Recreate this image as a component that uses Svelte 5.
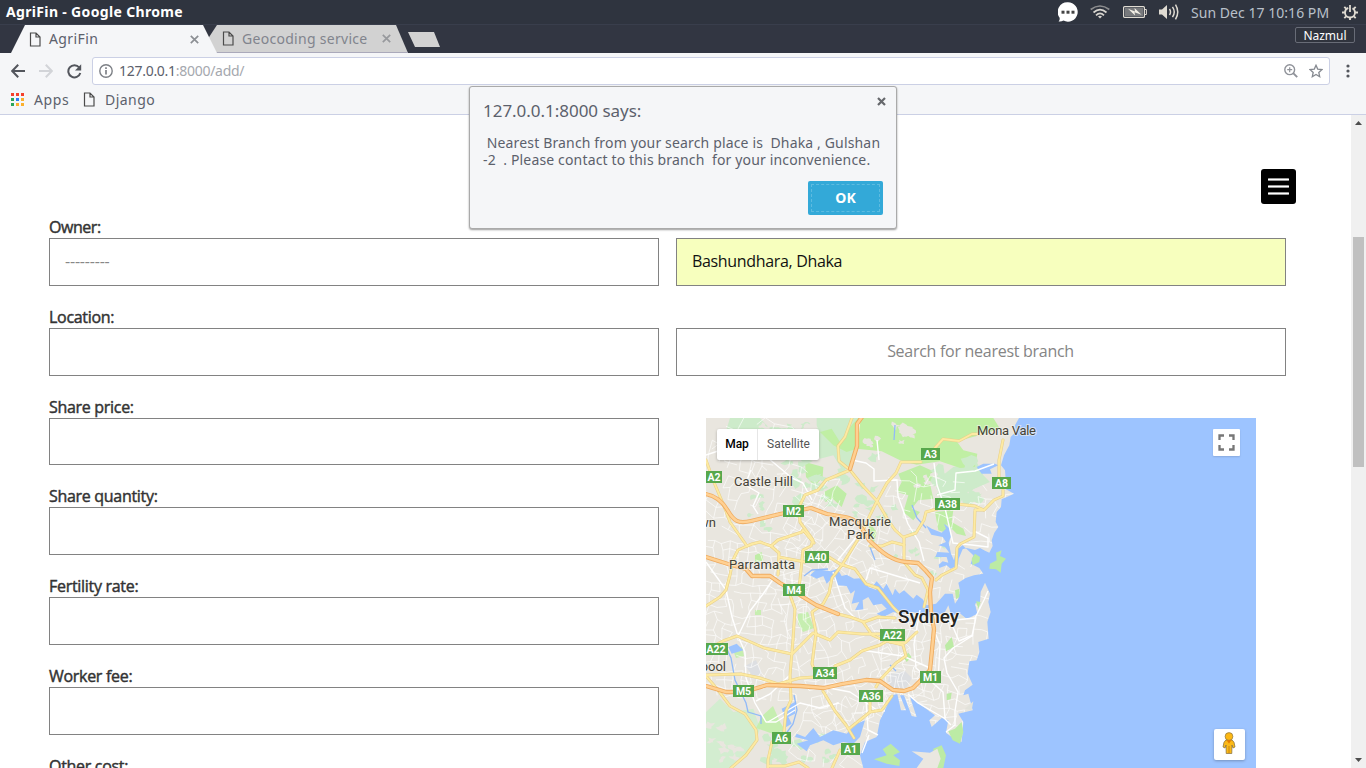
<script>
  const fields = ['Owner:', 'Location:', 'Share price:', 'Share quantity:', 'Fertility rate:', 'Worker fee:', 'Other cost:'];
  const message = ' Nearest Branch from your search place is  Dhaka , Gulshan\n-2  . Please contact to this branch  for your inconvenience.';

  // Deterministic street mesh under the main roads
  let seed = 17;
  const rnd = () => ((seed = (seed * 16807) % 2147483647) / 2147483647);
  function mesh(x0, y0, x1, y1, step, angle, keep) {
    const c = Math.cos(angle), s = Math.sin(angle);
    const cols = Math.ceil((x1 - x0) / step), rows = Math.ceil((y1 - y0) / step);
    const cx = (x0 + x1) / 2, cy = (y0 + y1) / 2;
    const pts = [];
    for (let j = 0; j <= rows; j++) {
      pts.push([]);
      for (let i = 0; i <= cols; i++) {
        const dx = x0 + i * step - cx + (rnd() - 0.5) * step * 0.6;
        const dy = y0 + j * step - cy + (rnd() - 0.5) * step * 0.6;
        pts[j].push((cx + dx * c - dy * s).toFixed(1) + ' ' + (cy + dx * s + dy * c).toFixed(1));
      }
    }
    let d = '';
    for (let j = 0; j <= rows; j++)
      for (let i = 0; i <= cols; i++) {
        if (i < cols && rnd() < keep) d += `M${pts[j][i]}L${pts[j][i + 1]}`;
        if (j < rows && rnd() < keep) d += `M${pts[j][i]}L${pts[j + 1][i]}`;
      }
    return d;
  }
  const streets = [
    mesh(700, 460, 830, 540, 10, 0.3, 0.5),
    mesh(700, 545, 800, 690, 8, 0.1, 0.68),
    mesh(790, 500, 870, 560, 8, 0.6, 0.62),
    mesh(795, 560, 900, 720, 9, -0.3, 0.62),
    mesh(880, 480, 1000, 590, 9, 0.2, 0.45),
    mesh(880, 610, 985, 730, 8, 0.12, 0.62),
    mesh(800, 700, 885, 765, 9, 0.4, 0.5),
    mesh(708, 420, 820, 470, 14, 0.5, 0.4)
  ];

  function blobs(x0, y0, w, h, n, size) {
    let d = '';
    for (let k = 0; k < n; k++) {
      const x = x0 + rnd() * w, y = y0 + rnd() * h;
      const m = 9;
      for (let i = 0; i < m; i++) {
        const a = (i / m) * 6.283, r = size * (0.25 + rnd() * 1);
        d += (i ? 'L' : 'M') + (x + Math.cos(a) * r * 1.3).toFixed(1) + ' ' + (y + Math.sin(a) * r).toFixed(1);
      }
      d += 'Z';
    }
    return d;
  }
  const paleGreen = blobs(785, 455, 90, 50, 26, 5) + blobs(750, 420, 60, 30, 12, 5) + blobs(935, 460, 45, 40, 18, 6) + blobs(765, 735, 40, 25, 14, 5) + blobs(850, 505, 50, 30, 8, 3) + blobs(745, 495, 30, 40, 7, 3) + blobs(880, 520, 70, 60, 10, 3) + blobs(810, 735, 35, 30, 8, 3);
  const clearings = blobs(865, 432, 60, 14, 7, 3) + blobs(710, 725, 35, 38, 12, 4) + blobs(895, 424, 25, 14, 5, 5) + blobs(755, 422, 60, 8, 6, 4) + blobs(915, 470, 20, 20, 4, 3);

  const motorways = [
    'M706 494C716 496 723 502 728 511C734 521 738 524 751 521L780 514L811 508L827 514L845 517C858 519 862 528 869 540C882 553 893 561 906 562L918 563L926 571L932 578L930 592L931 612L934 629L932 650L930 670L920 681L913 688L904 691L893 690L880 681L866 680L842 684L824 688L800 686L767 685L744 692L726 692L706 686',
    'M706 557L728 564L746 569L752 576L770 576L780 583L795 592L816 605L838 614',
    'M862 417L857 424L857 446L850 469'
  ];
  const arterials = [
    'M706 460L713 480L724 506L730 522L747 546L752 544L760 542L771 546L778 540L802 532L803 530L814 543',
    'M706 606L720 597L726 590L730 575L733 560L738 550L747 546',
    'M852 418L845 437L838 446L839 461L850 470L838 475L826 480L818 490L805 495L799 507L800 522L813 540L811 546L803 550L800 580L798 592',
    'M771 546L779 553L778 575M779 557L805 562M829 557L840 564L855 569L866 584L878 588L893 607L898 612',
    'M790 595L795 609L793 640L790 675L791 700L786 711L784 732M772 742L768 760L768 768M768 766L785 766L799 762L808 768',
    'M850 470L862 485L877 501L888 520L895 530L904 538L904 562L915 575L922 578L928 590L924 607',
    'M877 501L870 515L862 533L842 565L832 578L829 593L823 604L812 612L816 633L812 664L817 676M823 691L835 711L846 725L854 738M840 750L832 768',
    'M877 501L887 483L896 473L901 462L921 462M935 448L943 439L959 441L972 434L981 434M1003 440L999 460L999 478M1003 490L1003 496L994 500L984 510L975 510L974 537L960 544L957 548L956 568L942 575L936 580',
    'M904 537L916 533L924 520L926 512L937 509M957 504L975 506L984 510M870 546L882 546L892 542L904 545',
    'M706 650L723 641L737 636L753 643L764 648L792 654L813 633L830 640L838 632L862 634L880 634L887 632L898 633',
    'M706 675L741 674L760 678L778 684L800 678L815 677M835 666L850 660L862 651L880 645L887 641L903 645L906 656L896 663L880 680L876 687M870 701L870 712L882 710L892 696M870 712L850 728',
    'M706 676L718 690L730 706L745 714L756 730L757 740L746 755L731 768',
    'M838 614L850 617L864 622L878 617L895 618M863 622L872 635L883 640M917 632L905 643L890 642'
  ];
  const whites = [
    'M706 455L730 447L748 457L768 458L792 478L803 483L812 500',
    'M751 470L745 485L759 493L753 506L758 514',
    'M706 562L726 590L732 617L738 636L745 652L746 678L755 703L766 722L776 722L795 710',
    'M738 636L750 611L763 594L774 578',
    'M852 460L866 463L874 469L874 481L897 480L898 496L908 524L919 542L924 561M877 440L879 460M860 418L858 436',
    'M934 463L937 485L945 508L953 543L972 545L988 547L988 538L974 531',
    'M937 495L955 490L956 473L975 471L994 464',
    'M955 620L975 618L984 600L988 591M976 617L972 636L953 648L944 658L947 673L958 692L955 711L955 725L946 732',
    'M920 610L914 644L916 668L943 692L945 718M860 650L903 656L930 668',
    'M819 686L850 692L877 710L885 711M908 694L918 703L944 718L951 725M869 735L862 753M866 700L868 730L878 735',
    'M950 620L959 641L973 635M930 620L940 645L938 682',
    'M768 722L800 703L820 708L839 703M790 675L770 694L756 701',
    'M866 580L870 568L920 583M833 572L845 608L857 620M838 560L870 520'
  ];
  const creeks = 'M895 425L894 440M912 505L917 518L926 528M725 645L731 658L735 680L746 703L748 712L761 716L761 724M794 695L797 710L793 724L785 735M890 665L896 671M875 560L870 547M804 576L812 570L828 569';

  const shields = [
    ['A2', 706, 471, 16], ['A3', 921, 448, 19], ['A8', 992, 477, 19], ['A38', 935, 498, 25], ['M2', 783, 505, 21],
    ['A40', 805, 551, 24], ['M4', 783, 584, 22], ['A22', 880, 629, 25], ['A22', 704, 643, 24], ['A34', 813, 667, 24],
    ['M1', 920, 671, 21], ['M5', 733, 685, 21], ['A36', 859, 690, 24], ['A6', 772, 732, 19], ['A1', 841, 743, 19]
  ];
  const places = [
    ['Mona Vale', 977, 435, 59], ['Castle Hill', 734, 486, 59], ['Macquarie', 829, 526, 62],
    ['Park', 847, 539, 27], ['Parramatta', 729, 569, 66]
  ];
</script>

{#snippet page()}
  <svg class="doc" width="12" height="15" viewBox="0 0 12 15"><path d="M1.500 1h5.500l4 4v9H1.500zM7 1v4h4" fill="none" stroke="#4b4b4b" stroke-width="1.200"/></svg>
{/snippet}

<div class="screen">
  <header class="system">
    <b>AgriFin - Google Chrome</b>
    <div class="tray">
      <svg width="20" height="20" viewBox="0 0 20 20"><path d="M10 .3a9.7 9.7 0 1 1-4.5 18.3C4 19.4 2 19.7.6 19.4c1-1 1.200-2 1-3.700A9.700 9.700 0 0 1 10 .3z" fill="#fff"/><g fill="#444"><rect x="3.500" y="8.700" width="3" height="3"/><rect x="8.500" y="8.700" width="3" height="3"/><rect x="13.500" y="8.700" width="3" height="3"/></g></svg>
      <svg width="20" height="14" viewBox="0 0 20 14" fill="none" stroke="#d8d5cf" stroke-width="1.700"><path d="M.7 4.500Q10-2.500 19.300 4.500" opacity=".55"/><path d="M3.500 7.500Q10 1.800 16.500 7.500"/><path d="M6 10.300Q10 6.300 14 10.300"/><path d="M8 11.500L10 13.500L12 11.500Q10 10 8 11.500" fill="#d8d5cf" stroke="none"/></svg>
      <svg width="24" height="12" viewBox="0 0 24 12"><rect x=".6" y=".6" width="20.800" height="10.800" rx="1" fill="none" stroke="#dfdbd2" stroke-width="1.200"/><rect x="2" y="2" width="18" height="8" fill="#77797c"/><path d="M22 3.500h1.400v5H22" fill="none" stroke="#dfdbd2"/><path d="M5 2.800L12 5.500 11.500 2l7 6.800-7-2.600.6 3.200z" fill="#f2eee5"/></svg>
      <svg width="20" height="16" viewBox="0 0 20 16"><path d="M0 5.500h3L8 1v14l-5-4.500H0z" fill="#dfdbd2"/><g fill="none" stroke="#dfdbd2" stroke-width="1.500"><path d="M10.500 5q2 3 0 6M13.500 2.800q3.500 5.200 0 10.400M16.500.7q4.500 7.300 0 14.600"/></g></svg>
      <span class="clock">Sun Dec 17 10:16 PM</span>
      <svg width="16" height="16" viewBox="0 0 16 16" fill="none" stroke="#dfdbd2"><circle cx="8" cy="8.500" r="5" stroke-width="1.800" stroke-dasharray="26.200 5.200" stroke-dashoffset="-2.600" transform="rotate(-90 8 8.500)"/><path d="M8 1v7" stroke-width="1.800"/><path d="M0 8.500h3M13 8.500h3M2.300 2.800l1.800 1.800M13.700 2.800l-1.800 1.800M2.300 14.200l1.800-1.800M13.700 14.200l-1.800-1.800M8 13.500V16" stroke-width="1.900"/></svg>
    </div>
  </header>

  <nav class="tabs">
    <div class="tab active">{@render page()}<span>AgriFin</span><svg width="9" height="9" viewBox="0 0 9 9"><path d="M.8.8l7.400 7.400M8.200.8L.8 8.200" stroke="#8c8f94" stroke-width="1.700"/></svg></div>
    <div class="tab back">{@render page()}<span>Geocoding service</span><svg width="9" height="9" viewBox="0 0 9 9"><path d="M.8.8l7.400 7.400M8.200.8L.8 8.200" stroke="#97999d" stroke-width="1.700"/></svg></div>
    <div class="newtab"></div>
    <div class="user">Nazmul</div>
  </nav>

  <div class="toolbar">
    <svg width="14" height="14" viewBox="0 0 14 14" fill="none" stroke="#53565d" stroke-width="2"><path d="M14 7H1.500M7.200.8L1.200 7l6 6.200"/></svg>
    <svg class="fwd" width="14" height="14" viewBox="0 0 14 14" fill="none" stroke="#d2d4d8" stroke-width="2"><path d="M0 7h12.500M6.800.8l6 6.200-6 6.200"/></svg>
    <svg class="reload" width="15" height="15" viewBox="0 0 15 15"><path d="M12.200 3.500A6.100 6.100 0 1 0 13.300 9" fill="none" stroke="#53565d" stroke-width="2"/><path d="M14.200.3v6.200H8z" fill="#53565d"/></svg>
    <div class="address">
      <svg width="14" height="14" viewBox="0 0 14 14"><circle cx="7" cy="7" r="6.200" fill="none" stroke="#7d8086" stroke-width="1.400"/><path d="M7 6v4.600M7 3.300v1.700" stroke="#777a80" stroke-width="1.600"/></svg>
      <span class="url">127.0.0.1<i>:8000/add/</i></span>
      <svg class="mag" width="14" height="14" viewBox="0 0 14 14" fill="none" stroke="#8f9299"><circle cx="5.700" cy="5.700" r="4.900" stroke-width="1.400"/><path d="M9.200 9.200l4 4" stroke-width="1.900"/><path d="M5.700 3.200v5M3.200 5.700h5" stroke-width="1.200"/></svg>
      <svg width="14" height="14" viewBox="0 0 14 14"><path d="M7 1.300l1.700 3.800 4.300.4-3.200 2.900.9 4.300L7 10.500l-3.700 2.200.9-4.300L1 5.500l4.300-.4z" fill="none" stroke="#858990" stroke-width="1.300"/></svg>
    </div>
    <svg class="dots" width="4" height="14" viewBox="0 0 4 14" fill="#53565d"><circle cx="2" cy="2" r="1.600"/><circle cx="2" cy="7" r="1.600"/><circle cx="2" cy="12" r="1.600"/></svg>
  </div>

  <div class="bookmarks">
    <svg width="13" height="13" viewBox="0 0 13 13"><path d="M0 0h3v3H0zM5 0h3v3H5zM10 0h3v3h-3z" fill="#f5402c"/><path d="M0 5h3v3H0zM0 10h3v3H0z" fill="#2ba55b"/><path d="M5 5h3v3H5z" fill="#2f7df4"/><path d="M10 5h3v3h-3zM10 10h3v3h-3zM5 10h3v3H5z" fill="#fbb02d"/></svg>
    <span class="apps">Apps</span>
    {@render page()}
    <span class="django">Django</span>
  </div>

  <div class="viewport">
    <main>
      <div class="column">
        {#each fields as label, i}
          <div class="field"><div class="caption" class:first={i === 0}>{label}</div><div class="box">{#if i === 0}<span>---------</span>{/if}</div></div>
        {/each}
      </div>
      <div class="column right">
        <div class="box search">Bashundhara, Dhaka</div>
        <div class="box submit">Search for nearest branch</div>
        <div class="map">
          <svg width="550" height="350" viewBox="706 418 550 350">
            <rect x="706" y="418" width="550" height="350" fill="#e9e6df"/>
            <g transform="translate(700 412) scale(.33333)">
              <path d="M90 18L180 18L210 50L190 90L160 60L120 90L80 50ZM350 18L480 18L470 130L430 180L400 130L360 140L350 110ZM760 165L830 150L850 190L870 210L800 240L770 290L720 280L715 200Z" fill="#cdebca"/>
              <path d="M475 18H880L900 50L830 72L770 88L790 115L832 125L825 165L780 168L720 148L650 158L600 145L545 118L470 110L440 120L400 100L360 60L395 50L420 90L455 40Z" fill="#c0efa4"/>
              <path d="M595 185L660 160L705 180L690 215L700 260L655 265L635 290L660 300L640 325L610 300L625 250L590 240L605 210ZM705 300L760 295L755 330L790 350L798 372L770 365L745 340L745 365L715 355ZM315 150L370 165L368 195L345 222L318 195ZM372 240L410 220L440 245L425 285L400 262L375 270ZM508 330L530 360L520 400L505 380ZM165 430L185 420L190 445L165 455ZM340 480L365 470L345 500Z" fill="#bfeda6"/>
              <path d="M18 900L60 860L100 900L160 890L180 950L160 1010L100 1068H18Z" fill="#d3edd0"/>
            </g>
            <path d="M798 614L808 612L814 628L803 632L798 624ZM755 610h6v5h-6zM733 650L742 647L744 656L736 658ZM762 716L773 706L780 722L790 738L776 735L756 728Z" fill="#c6eeb0"/>
            <path d={paleGreen} fill="#cdebca"/>
            <path d={clearings} fill="#e9e6df"/>
            <path d="M890 674L905 671L912 678L905 690L893 690L888 681ZM745 666L756 660L762 674L753 676Z" fill="#dddfe2"/>
            {#each streets as d}<path {d} fill="none" stroke="#fff" stroke-width=".8" opacity=".8"/>{/each}

            <rect x="1027" y="418" width="229" height="350" fill="#9dc4ff"/>
            <g transform="translate(700 412) scale(.33333)" fill="#9dc4ff">
              <path d="M990 18L957 18L945 40L947 60L932 75L928 100L912 130L903 160L915 175L918 215L918 232L942 245L905 262L903 285L890 300L887 330L895 345L883 362L875 385L878 402L868 422L855 416L840 408L825 414L800 408L788 412L776 440L774 460L752 470L740 460L718 468L716 458L728 448L745 452L740 435L706 435L712 420L748 422L735 405L715 400L738 390L728 375L694 368L678 340L695 350L725 362L738 350L732 335L748 348L753 372L746 392L753 425L762 445L768 415L788 400L820 430L812 455L838 468L850 485L822 490L797 498L775 512L780 535L775 560L765 575L758 545L735 545L722 560L708 575L680 580L668 562L650 548L640 560L612 535L598 545L585 530L578 550L560 515L550 530L530 508L520 520L530 535L505 525L490 498L462 500L440 488L425 492L412 470L392 478L350 472L330 490L350 500L370 492L380 515L400 495L412 520L440 522L452 545L465 535L455 575L478 570L465 595L490 592L488 565L505 555L520 580L545 575L560 590L530 605L550 615L580 600L598 605L640 600L680 615L690 590L712 610L735 600L745 580L755 615L775 600L800 622L832 605L825 575L840 570L842 540L855 512L870 545L865 570L872 600L862 630L866 680L835 690L838 720L830 745L808 748L803 785L818 818L795 835L790 850L805 845L818 895L775 905L790 930L785 990L755 975L738 962L745 925L725 918L695 945L688 925L705 910L650 870L630 855L650 915L635 912L612 850L600 850L618 895L603 895L592 846L575 850L555 895L540 925L530 975L495 990L480 1030L490 1068L990 1068Z"/>
              <path d="M830 165L850 155L885 155L895 160L870 172L875 185L845 185Z"/>
              <path d="M290 965L315 975L340 948L360 975L400 955L440 965L470 935L495 925L480 975L460 995L430 990L400 1000L370 985L330 1000L320 1018L290 995L325 985L285 975ZM245 890L285 870L285 905L265 915L275 935L250 950L255 920ZM85 705L110 695L130 715L95 725Z"/>
            </g>
            <path d={creeks} fill="none" stroke="#91baf8" stroke-width="1.300"/>
            <g transform="translate(700 412) scale(.33333)">
              <path d="M870 455L890 445L888 422L905 415L900 432L918 440L905 455L902 482L888 472L868 470ZM815 440L825 425L840 435L838 450L818 460ZM828 568L842 570L835 590ZM735 700L755 675L762 705L738 718ZM785 930L790 960L780 995L758 985L745 958L765 950ZM740 845L755 842L752 862L740 865ZM610 735L625 722L635 735L620 750ZM765 535L778 530L778 555L768 562Z" fill="#bceba5"/>
              <path d="M522 1042L560 1030L548 1012L572 995L600 1020L580 1030L600 1045L598 1062L560 1055ZM700 1010L725 1000L738 1030L730 1068H700Z" fill="#bceba5"/>
              <path d="M635 1018L690 1022L712 1010L722 1040L712 1068H650L670 1040Z" fill="#eae7e0"/>
              <path d="M795 890L820 868L815 895ZM800 620L770 625L780 605Z" fill="#e2e2da"/>
            </g>
            {#each whites as d}<path {d} fill="none" stroke="#fff" stroke-width="1.400" stroke-linejoin="round"/>{/each}
            <g fill="none" stroke-linejoin="round" stroke-linecap="round">
              {#each arterials as d}<path {d} stroke="#e8d08a" stroke-width="3"/>{/each}
              {#each arterials as d}<path {d} stroke="#fdeaa2" stroke-width="1.900"/>{/each}
              {#each motorways as d}<path {d} stroke="#efac61" stroke-width="4.300"/>{/each}
              {#each motorways as d}<path {d} stroke="#ffd092" stroke-width="2.500"/>{/each}
            </g>
            {#each shields as [name, x, y, w]}
              <rect {x} {y} width={w} height="12" fill="#57a84c"/>
              <text class="shield" x={x + w / 2} y={y + 10} text-anchor="middle">{name}</text>
            {/each}
            {#each places as [name, x, y, w]}
              <text class="place" {x} {y} textLength={w}>{name}</text>
            {/each}
            <text class="place" x="716" y="527" text-anchor="end">wn</text>
            <text class="place" x="726" y="671" text-anchor="end">pool</text>
            <text class="city" x="898" y="623" textLength="61">Sydney</text>
          </svg>
          <div class="types"><b>Map</b><span>Satellite</span></div>
          <div class="full"><svg width="17" height="17" viewBox="0 0 17 17"><path d="M1.500 6V1.500H6M11 1.500h4.500V6M15.500 11v4.500H11M6 15.500H1.500V11" fill="none" stroke="#777" stroke-width="2.300"/></svg></div>
          <div class="pegman"><svg width="14" height="22" viewBox="0 0 14 22"><path d="M4 8Q1.500 9 1 15l2 1 1-3 .2 8.500h5.600L10 13l1 3 2-1q-.5-6-3-7z" fill="#fbb917" stroke="#806b42" stroke-width=".7"/><circle cx="7" cy="4.500" r="3.900" fill="#fdb813" stroke="#8b7445" stroke-width=".7"/><path d="M4.500 8.300h5L7 11.500z" fill="#e67a00"/><path d="M7 14v7" stroke="#c8860d"/></svg></div>
        </div>
      </div>
      <button class="menu" aria-label="Menu"><i></i><i></i><i></i></button>
    </main>
    <aside class="scroll">
      <svg width="7" height="4" viewBox="0 0 7 4"><path d="M0 4L3.500 0 7 4z" fill="#4d4d4d"/></svg>
      <div class="thumb"></div>
      <svg class="down" width="7" height="4" viewBox="0 0 7 4"><path d="M0 0h7L3.500 4z" fill="#4d4d4d"/></svg>
    </aside>
  </div>

  <section class="dialog">
    <h1>127.0.0.1:8000 says:</h1>
    <svg class="x" width="9" height="9" viewBox="0 0 9 9"><path d="M1 1l7 7M8 1L1 8" stroke="#66686c" stroke-width="2.200"/></svg>
    <p>{message}</p>
    <button class="ok"><span>OK</span></button>
  </section>
</div>

<style>
  :global(body) { margin: 0; overflow: hidden; }
  * { box-sizing: border-box; }
  svg { display: block; flex: none; }
  .screen { position: relative; width: 1366px; height: 768px; overflow: hidden; display: flex; flex-direction: column; background: #fff; font-family: "Noto Sans", "Open Sans", sans-serif; font-size: 14px; color: #5c616c; white-space: nowrap; }
  .system { height: 24px; flex: none; display: flex; align-items: center; justify-content: space-between; padding: 0 8px 1px 6px; background: #2f343f; color: #fff; }
  .system b { font-size: 14px; letter-spacing: .34px; }
  .tray { display: flex; align-items: center; padding-top: 1px; }
  .tray svg:nth-child(1) { margin-right: 12px; }
  .tray svg:nth-child(2) { margin-right: 13px; }
  .tray svg:nth-child(3) { margin-right: 12px; }
  .tray svg:nth-child(4) { margin-right: 12px; }
  .clock { width: 138px; margin-right: 13px; color: #b9c0ca; letter-spacing: .04px; }
  .tabs { height: 29px; flex: none; display: flex; padding-left: 11px; background: #323642; border-top: 1px solid #393e4c; }
  .tab { height: 28px; display: flex; align-items: center; }
  .active { width: 206px; padding-left: 18px; background: #f5f6f8; clip-path: polygon(0 100%, 14px 0, 192px 0, 206px 100%); z-index: 2; }
  .tab .doc { margin-right: 8px; }
  .active span { width: 141px; margin-top: -1px; letter-spacing: .4px; }
  .back { width: 203px; margin-left: -12px; padding-left: 17px; background: #d2d2d2; border-bottom: 1px solid #aaa9ba; clip-path: polygon(0 65%, 12px 0, 191px 0, 203px 100%, 10px 100%); color: #81848d; }
  .back span { width: 140px; letter-spacing: .29px; }
  .newtab { width: 32px; height: 15px; margin-top: 7px; background: #d2d2d2; clip-path: polygon(0 0, 26px 0, 32px 100%, 7px 100%); }
  .user { margin: 2px 11px 0 auto; width: 60px; height: 16px; border: 1px solid #686c77; border-radius: 2px; color: #fff; background: #30343e; font-size: 12px; line-height: 15px; text-align: center; }
  .toolbar { height: 35px; flex: none; display: flex; align-items: center; padding: 1px 16px 0 11px; background: #f5f6f8; }
  .fwd { margin-left: 14px; }
  .reload { margin: 0 10px 0 14px; }
  .address { flex: 1; height: 28px; display: flex; align-items: center; padding: 0 6px; background: #fff; border: 1px solid #cbd0e5; border-radius: 3px; }
  .url { flex: 1; margin: -2px 0 0 6px; letter-spacing: -.28px; }
  .url i { font-style: normal; color: #a5a8ae; }
  .mag { margin-right: 11px; }
  .dots { margin-left: 16px; }
  .bookmarks { height: 27px; flex: none; display: flex; align-items: center; padding: 0 11px 3px; background: #f5f6f8; border-bottom: 1px solid #cbd0e5; }
  .apps { margin: 0 14px 0 10px; width: 35px; letter-spacing: .6px; }
  .django { margin-left: 10px; letter-spacing: .45px; }
  .viewport { flex: 1; min-height: 0; display: flex; background: #fff; }
  main { position: relative; width: 1351px; display: flex; gap: 17px; padding: 101px 0 0 49px; overflow: hidden; font-family: "Open Sans", sans-serif; font-size: 16px; color: #333; }
  .column { width: 610px; flex: none; display: flex; flex-direction: column; gap: 20.050px; }
  .field { flex: none; }
  .caption { height: 22px; line-height: 23px; font-size: 16px; letter-spacing: -.3px; -webkit-text-stroke: .45px #333; }
  .caption.first { letter-spacing: -.45px; }
  .box { height: 47.750px; border: 1px solid #828282; background: #fff; padding: 0 15px; line-height: 45px; }
  .box span { color: #888; letter-spacing: -.2px; }
  .right { padding-top: 22px; gap: 42.050px; }
  .right .box { flex: none; }
  .search { background: #f7ffbe; color: #111; letter-spacing: -.33px; }
  .submit { text-align: center; color: #858585; letter-spacing: -.28px; padding-right: 16px; }
  .map { position: relative; width: 550px; height: 350px; margin-left: 30px; flex: none; font-family: Roboto, sans-serif; }
  .shield { font: 700 10.500px Roboto, sans-serif; fill: #fff; }
  .place { font: 400 13px Roboto, sans-serif; fill: #444236; stroke: #f5f2ec; stroke-width: 2px; paint-order: stroke; stroke-opacity: .6; }
  .city { font: 500 19px Roboto, sans-serif; fill: #25251f; stroke: #fff; stroke-width: 2px; stroke-opacity: .5; paint-order: stroke; }
  .types { position: absolute; left: 11px; top: 11px; width: 102px; height: 31px; display: flex; background: #fff; border-radius: 2px; box-shadow: 0 1px 3px #0004; font-size: 12px; line-height: 30px; }
  .types b { width: 41px; text-align: center; font-weight: 500; color: #000; border-right: 1px solid #e6e6e6; }
  .types span { flex: 1; text-align: center; color: #565656; }
  .full { position: absolute; left: 507px; top: 11px; width: 27px; height: 27px; padding: 5px; background: #fff; border-radius: 1px; box-shadow: 0 1px 2px #0002; }
  .pegman { position: absolute; left: 508px; top: 311px; width: 31px; height: 31px; padding: 3px 8px; background: #fff; border-radius: 2px; box-shadow: 0 1px 3px #0004; }
  .menu { position: absolute; left: 1261px; top: 54px; width: 35px; height: 35px; padding: 0 7px; display: flex; flex-direction: column; justify-content: center; gap: 4px; border: 0; border-radius: 3px; background: #000; }
  .menu i { height: 3px; border-radius: 1px; background: #fff; border: solid #999; border-width: 1px 0; }
  .scroll { width: 15px; flex: none; display: flex; flex-direction: column; align-items: center; background: #f0f0f0; padding: 6px 0; }
  .thumb { width: 11px; height: 230px; margin-top: 112px; background: #c0c0c0; }
  .down { margin-top: auto; }
  .dialog { position: absolute; left: 469px; top: 86px; width: 428px; height: 143px; padding: 12px 13px 13px; display: flex; flex-direction: column; background: #f5f6f8; border: 1px solid #aaa; border-radius: 3px; box-shadow: 0 1px 2px #0006; }
  h1 { margin: 0 0 11px; font-weight: 400; font-size: 17px; line-height: 24px; letter-spacing: -.03px; }
  p { margin: 0; line-height: 17px; white-space: pre; letter-spacing: .17px; word-spacing: -.1px; }
  .x { position: absolute; right: 10px; top: 10px; }
  .ok { width: 75px; height: 34px; margin: auto 0 0 auto; padding: 3px; border: 0; border-radius: 2px; background: #33a9d8; color: #fff; }
  .ok span { display: block; height: 28px; border: 1px dashed #5dbbe0; font: 700 14px/26px "Noto Sans", sans-serif; }
</style>
